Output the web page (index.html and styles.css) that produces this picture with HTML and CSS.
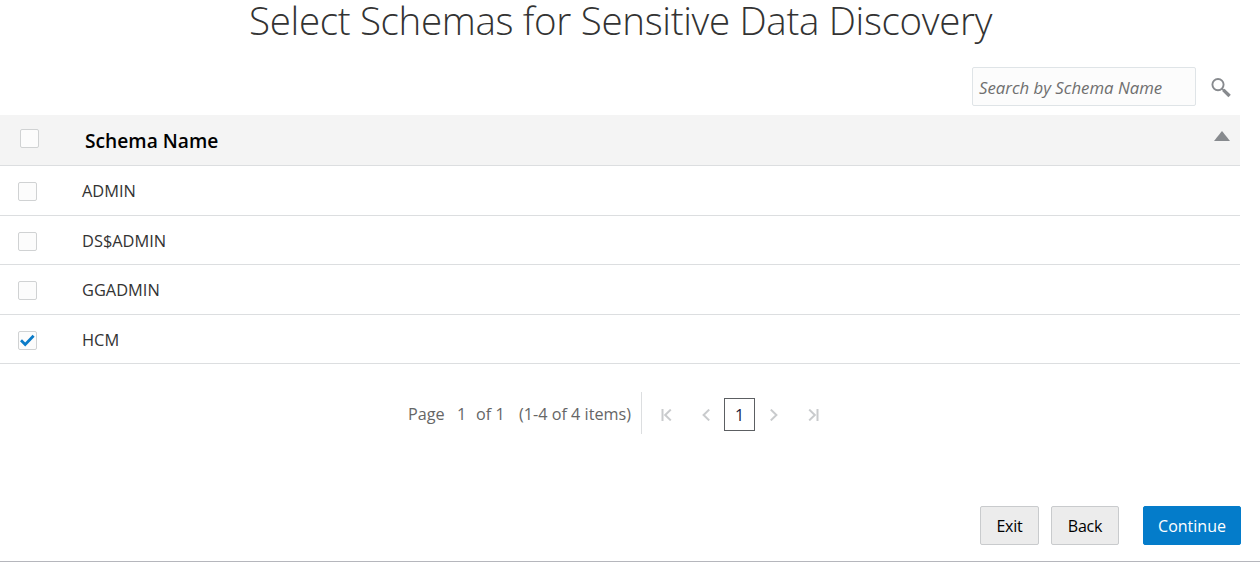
FILE: index.html
```html
<!DOCTYPE html>
<html lang="en">
<head>
<meta charset="utf-8">
<title>Select Schemas for Sensitive Data Discovery</title>
<link rel="stylesheet" href="styles.css">
</head>
<body>
<main class="wizard">
  <h1 class="title">Select Schemas for Sensitive Data Discovery</h1>
  <div class="search">
    <div class="search-box"><span>Search by Schema Name</span></div>
    <svg class="search-icon" width="22" height="22" viewBox="0 0 22 22"><circle cx="8" cy="7.6" r="5.6" fill="none" stroke="#878a8e" stroke-width="1.9"/><path d="M12 11.6l2 2" stroke="#878a8e" stroke-width="1.6"/><path d="M13.3 12.9l6.3 6.1" stroke="#878a8e" stroke-width="3.4"/></svg>
  </div>
  <div class="table">
    <div class="row head"><span class="check"></span><span class="name">Schema Name</span>
      <svg class="sort" width="16" height="10" viewBox="0 0 16 10"><path d="M0 10L8 0l8 10z" fill="#878a8e"/></svg>
    </div>
    <div class="row"><span class="check"></span><span class="name">ADMIN</span></div>
    <div class="row short"><span class="check"></span><span class="name">DS$ADMIN</span></div>
    <div class="row"><span class="check"></span><span class="name">GGADMIN</span></div>
    <div class="row short"><span class="check"><svg width="17" height="17" viewBox="0 0 17 17"><path d="M2 8.2l4.2 4.2L14.6 3.8" fill="none" stroke="#0a7bc8" stroke-width="2.8"/></svg></span><span class="name">HCM</span></div>
  </div>
  <nav class="pager">
    <div class="summary"><span class="s1">Page</span><span class="s2">1</span><span class="s3">of 1</span><span class="s4">(1-4 of 4 items)</span></div>
    <div class="links">
      <svg class="first" width="11" height="12" viewBox="0 0 11 12"><path d="M1.5 0v12M9.8.6L4.2 6l5.6 5.4" fill="none" stroke="#c9cbcd" stroke-width="2"/></svg>
      <svg class="prev" width="8" height="12" viewBox="0 0 8 12"><path d="M7.2.6L1.6 6l5.6 5.4" fill="none" stroke="#c9cbcd" stroke-width="2"/></svg>
      <span class="current">1</span>
      <svg class="next" width="8" height="12" viewBox="0 0 8 12"><path d="M.8.6L6.4 6 .8 11.4" fill="none" stroke="#c9cbcd" stroke-width="2"/></svg>
      <svg class="last" width="11" height="12" viewBox="0 0 11 12"><path d="M9.5 0v12M1.2.6L6.8 6l-5.6 5.4" fill="none" stroke="#c9cbcd" stroke-width="2"/></svg>
    </div>
  </nav>
  <footer class="actions">
    <button class="btn exit">Exit</button>
    <button class="btn back">Back</button>
    <button class="btn primary">Continue</button>
  </footer>
</main>
</body>
</html>
```
FILE: styles.css
```css
* { box-sizing: border-box; }
body { margin: 0; background: #fff; font-family: "Open Sans", "Noto Sans", sans-serif; color: #333; }
svg { display: block; flex: none; }
.wizard { width: 1260px; height: 562px; display: flex; flex-direction: column; border-bottom: 1px solid #b5b6bc; }
.title { margin: 0; height: 67px; padding-left: 249px; font-size: 38.5px; line-height: 41px; font-weight: 300; letter-spacing: -0.32px; white-space: nowrap; }
.search { height: 48px; padding-left: 972px; display: flex; }
.search-box { width: 224px; height: 39px; padding: 0 6px; border: 1px solid #dfe4e7; border-radius: 2px; background: #fcfcfc; font-size: 16.8px; line-height: 40px; font-style: italic; color: #6f6f6f; white-space: nowrap; }
.search-icon { margin: 10px 0 0 14px; }
.table { width: 1240px; }
.row { height: 50px; display: flex; align-items: center; border-bottom: 1px solid #dcdee0; padding-left: 18px; }
.row.short { height: 49px; }
.head { height: 51px; background: #f4f4f4; padding: 0 10px 0 20px; }
.check { width: 19px; height: 19px; flex: none; margin-top: 2px; border: 1px solid #d0d2d3; border-radius: 2px; background: #fcfcfc; }
.name { margin: 1px 0 0 45px; font-size: 16.4px; line-height: 24px; white-space: nowrap; }
.head .check { margin-top: -3px; }
.head .name { flex: 1; margin-left: 46px; font-size: 19.2px; font-weight: 600; color: #000; }
.sort { margin-top: -8px; }
.pager { height: 142px; padding: 28px 0 0 408px; display: flex; align-items: flex-start; }
.summary { width: 234px; height: 42px; display: flex; border-right: 1px solid #dcdee0; font-size: 16.2px; line-height: 44px; color: #666; white-space: nowrap; }
.s1 { width: 49px; }
.s2 { width: 19px; }
.s3 { width: 43px; }
.links { height: 42px; display: flex; align-items: center; padding-top: 3px; }
.first { margin-left: 19px; }
.prev { margin-left: 30px; }
.current { width: 31px; height: 33px; margin: 0 15px 0 14px; border: 1px solid #5c5f62; text-align: center; font-size: 16px; line-height: 32px; color: #1b1b3f; }
.last { margin-left: 30px; }
.actions { display: flex; padding-left: 980px; }
.btn { height: 39px; padding: 1px 0 0; border: 1px solid #c9cbcd; border-radius: 2px; background: #ececec; color: #000; font: 16px/36px "Open Sans", "Noto Sans", sans-serif; letter-spacing: -0.2px; }
.exit { width: 59px; margin-right: 12px; }
.back { width: 68px; margin-right: 24px; }
.primary { width: 98px; border-color: #047cca; background: #047cca; color: #fff; letter-spacing: 0; }
```
